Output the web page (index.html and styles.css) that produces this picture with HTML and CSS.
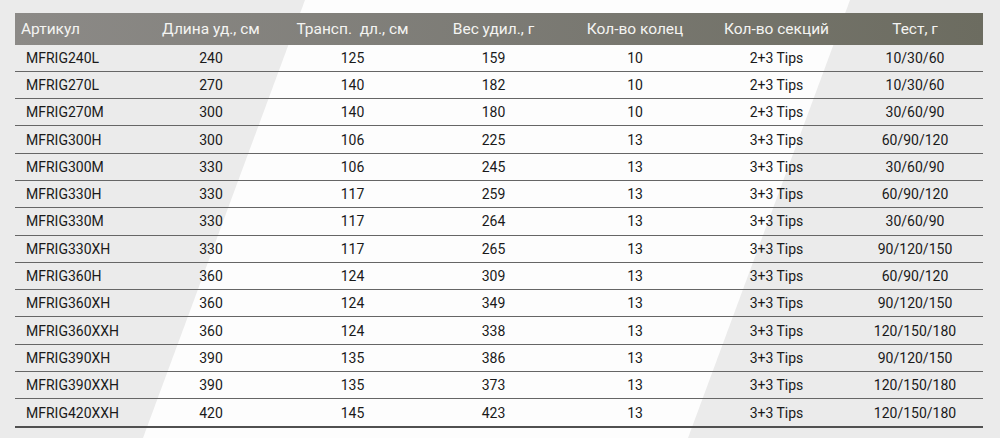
FILE: index.html
```html
<!DOCTYPE html>
<html lang="ru">
<head>
<meta charset="utf-8">
<link rel="stylesheet" href="styles.css">
</head>
<body>
<div class="bg"></div>
<div class="table">
  <div class="row head">
    <div class="c first">Артикул</div><div class="c">Длина уд., см</div><div class="c">Трансп.&nbsp; дл., см</div><div class="c">Вес удил., г</div><div class="c">Кол-во колец</div><div class="c">Кол-во секций</div><div class="c">Тест, г</div>
  </div>
  <div class="row"><div class="c first">MFRIG240L</div><div class="c">240</div><div class="c">125</div><div class="c">159</div><div class="c">10</div><div class="c">2+3 Tips</div><div class="c">10/30/60</div></div>
  <div class="row"><div class="c first">MFRIG270L</div><div class="c">270</div><div class="c">140</div><div class="c">182</div><div class="c">10</div><div class="c">2+3 Tips</div><div class="c">10/30/60</div></div>
  <div class="row"><div class="c first">MFRIG270M</div><div class="c">300</div><div class="c">140</div><div class="c">180</div><div class="c">10</div><div class="c">2+3 Tips</div><div class="c">30/60/90</div></div>
  <div class="row"><div class="c first">MFRIG300H</div><div class="c">300</div><div class="c">106</div><div class="c">225</div><div class="c">13</div><div class="c">3+3 Tips</div><div class="c">60/90/120</div></div>
  <div class="row"><div class="c first">MFRIG300M</div><div class="c">330</div><div class="c">106</div><div class="c">245</div><div class="c">13</div><div class="c">3+3 Tips</div><div class="c">30/60/90</div></div>
  <div class="row"><div class="c first">MFRIG330H</div><div class="c">330</div><div class="c">117</div><div class="c">259</div><div class="c">13</div><div class="c">3+3 Tips</div><div class="c">60/90/120</div></div>
  <div class="row"><div class="c first">MFRIG330M</div><div class="c">330</div><div class="c">117</div><div class="c">264</div><div class="c">13</div><div class="c">3+3 Tips</div><div class="c">30/60/90</div></div>
  <div class="row"><div class="c first">MFRIG330XH</div><div class="c">330</div><div class="c">117</div><div class="c">265</div><div class="c">13</div><div class="c">3+3 Tips</div><div class="c">90/120/150</div></div>
  <div class="row"><div class="c first">MFRIG360H</div><div class="c">360</div><div class="c">124</div><div class="c">309</div><div class="c">13</div><div class="c">3+3 Tips</div><div class="c">60/90/120</div></div>
  <div class="row"><div class="c first">MFRIG360XH</div><div class="c">360</div><div class="c">124</div><div class="c">349</div><div class="c">13</div><div class="c">3+3 Tips</div><div class="c">90/120/150</div></div>
  <div class="row"><div class="c first">MFRIG360XXH</div><div class="c">360</div><div class="c">124</div><div class="c">338</div><div class="c">13</div><div class="c">3+3 Tips</div><div class="c">120/150/180</div></div>
  <div class="row"><div class="c first">MFRIG390XH</div><div class="c">390</div><div class="c">135</div><div class="c">386</div><div class="c">13</div><div class="c">3+3 Tips</div><div class="c">90/120/150</div></div>
  <div class="row"><div class="c first">MFRIG390XXH</div><div class="c">390</div><div class="c">135</div><div class="c">373</div><div class="c">13</div><div class="c">3+3 Tips</div><div class="c">120/150/180</div></div>
  <div class="row last"><div class="c first">MFRIG420XXH</div><div class="c">420</div><div class="c">145</div><div class="c">423</div><div class="c">13</div><div class="c">3+3 Tips</div><div class="c">120/150/180</div></div>
</div>
</body>
</html>
```

FILE: styles.css
```css
* { box-sizing: border-box; }
html, body { margin: 0; padding: 0; }
body {
  width: 1000px;
  height: 438px;
  overflow: hidden;
  background: #ebebeb;
  position: relative;
  font-family: Roboto, "Liberation Sans", sans-serif;
}
.bg {
  position: absolute;
  inset: 0;
  background: #fdfdfd;
  clip-path: polygon(305px 0, 850px 0, 688px 438px, 143px 438px);
}
.table {
  position: relative;
  margin: 13px 0 0 15px;
  width: 968px;
}
.row {
  display: grid;
  grid-template-columns: 125px 142px 141px 141px 142px 141px 136px;
  height: 27.3px;
  align-items: center;
  border-bottom: 1px solid #666;
  font-size: 14px;
  color: #1a1a1a;
}
.row.head {
  height: 31.5px;
  border-bottom: none;
  background: linear-gradient(to right, #8c8a87, #7c7b75 50%, #6c6c60);
  color: #f4f4f2;
  font-size: 15.5px;
}
.row.last { border-bottom: 2px solid #505050; height: 28.5px; }
.c { text-align: center; white-space: nowrap; }
.c.first { text-align: left; padding-left: 11px; }
.head .c.first { padding-left: 6px; }
```
